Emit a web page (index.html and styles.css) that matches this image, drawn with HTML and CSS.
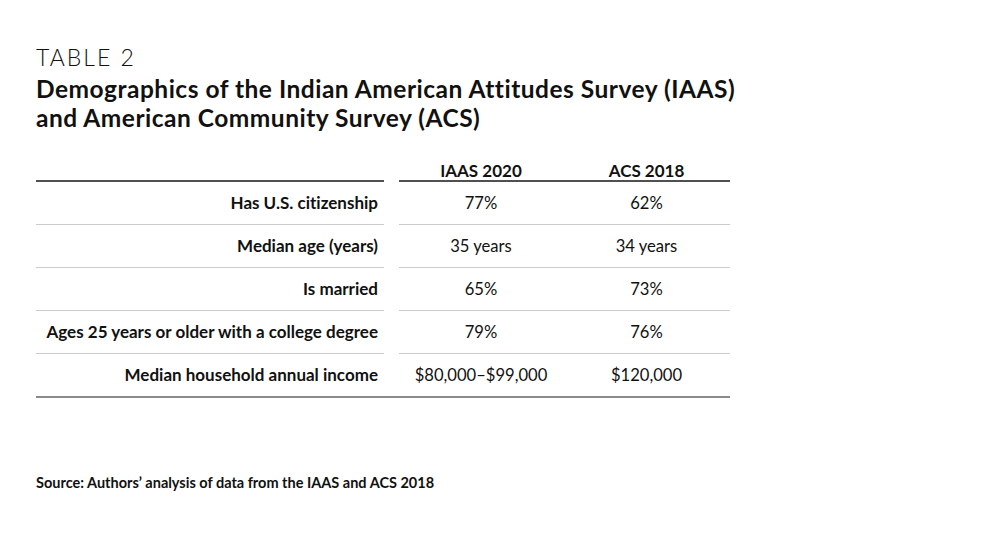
FILE: index.html
```html
<!DOCTYPE html>
<html>
<head>
<meta charset="utf-8">
<link rel="stylesheet" href="styles.css">
</head>
<body>
<div class="page">
  <div class="eyebrow">TABLE 2</div>
  <h1 class="title">Demographics of the Indian American Attitudes Survey (IAAS)<br>and American Community Survey (ACS)</h1>
  <div class="table">
    <div class="row head">
      <div class="label"></div>
      <div class="cell">IAAS 2020</div>
      <div class="cell">ACS 2018</div>
    </div>
    <div class="row">
      <div class="label">Has U.S. citizenship</div>
      <div class="cell">77%</div>
      <div class="cell">62%</div>
    </div>
    <div class="row">
      <div class="label">Median age (years)</div>
      <div class="cell">35 years</div>
      <div class="cell">34 years</div>
    </div>
    <div class="row">
      <div class="label">Is married</div>
      <div class="cell">65%</div>
      <div class="cell">73%</div>
    </div>
    <div class="row">
      <div class="label">Ages 25 years or older with a college degree</div>
      <div class="cell">79%</div>
      <div class="cell">76%</div>
    </div>
    <div class="row last">
      <div class="label">Median household annual income</div>
      <div class="cell">$80,000–$99,000</div>
      <div class="cell">$120,000</div>
    </div>
  </div>
  <p class="source">Source: Authors’ analysis of data from the IAAS and ACS 2018</p>
</div>
</body>
</html>
```
FILE: styles.css
```css
html, body {
  margin: 0;
  padding: 0;
  background: #fff;
}
body {
  font-family: Lato, "Open Sans", sans-serif;
  color: #111;
  font-variant-ligatures: none;
}
.page {
  padding: 44px 0 0 36px;
}
.eyebrow {
  font-weight: 300;
  font-size: 23px;
  line-height: 26px;
  letter-spacing: 2px;
}
.title {
  margin: 4px 0 0;
  font-weight: 700;
  font-size: 24.5px;
  line-height: 29px;
  letter-spacing: 0.5px;
}
.table {
  margin-top: 22px;
  width: 694px;
  border-bottom: 2px solid #8a8a8a;
}
.row {
  display: grid;
  grid-template-columns: 363px 164px 167px;
}
.row .label {
  margin-right: 15px;
  padding-right: 6px;
  text-align: right;
  font-weight: 700;
  font-size: 17px;
  height: 42px;
  line-height: 42px;
  border-bottom: 1px solid #cbcbcb;
}
.row .cell {
  text-align: center;
  font-size: 16.6px;
  height: 42px;
  line-height: 42px;
  border-bottom: 1px solid #cbcbcb;
}
.row.head .label,
.row.head .cell {
  box-sizing: border-box;
  height: 28px;
  padding-top: 6px;
  line-height: 21px;
  border-bottom: 2px solid #505050;
}
.row.head .cell {
  font-weight: 700;
  font-size: 17px;
}
.row.last .label,
.row.last .cell {
  border-bottom: none;
}
.source {
  margin: 76px 0 0;
  font-weight: 700;
  font-size: 14.5px;
}
```
